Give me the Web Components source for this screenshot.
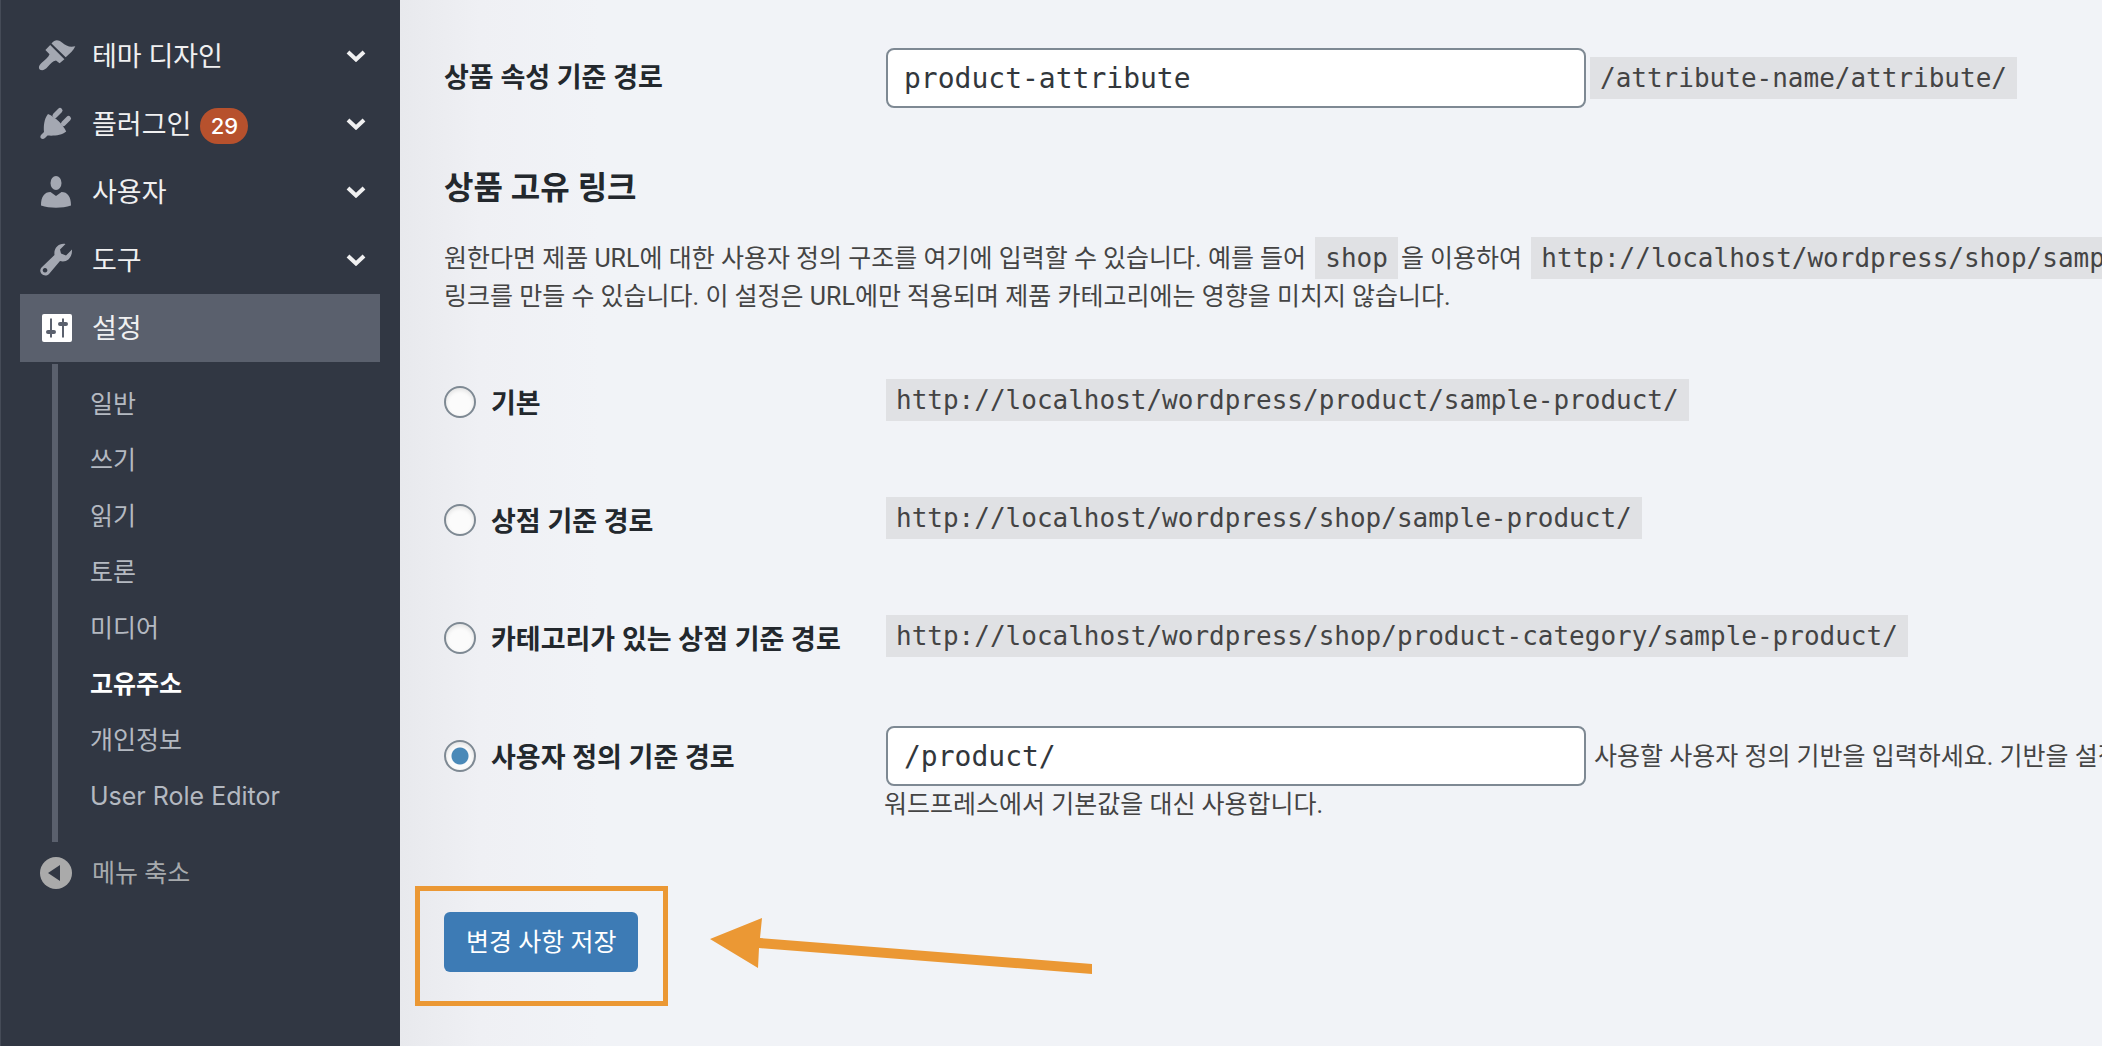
<!DOCTYPE html>
<html lang="ko">
<head>
<meta charset="utf-8">
<title>고유주소 설정</title>
<style>
html, body { margin: 0; }
body { background: #f1f3f7; font-family: Roboto, "Noto Sans CJK KR", sans-serif; color: #444; font-size: 27px; line-height: 32px; overflow: hidden; }
</style>
</head>
<body>
<wp-admin>
  <side-menu slot="menu">
    <menu-item icon="brush" arrow>테마 디자인</menu-item>
    <menu-item icon="plug" arrow count="29">플러그인</menu-item>
    <menu-item icon="user" arrow>사용자</menu-item>
    <menu-item icon="wrench" arrow>도구</menu-item>
    <menu-item icon="sliders" current>설정</menu-item>
    <sub-menu slot="sub">
      <sub-item>일반</sub-item>
      <sub-item>쓰기</sub-item>
      <sub-item>읽기</sub-item>
      <sub-item>토론</sub-item>
      <sub-item>미디어</sub-item>
      <sub-item current>고유주소</sub-item>
      <sub-item>개인정보</sub-item>
      <sub-item>User Role Editor</sub-item>
    </sub-menu>
    <collapse-button slot="foot">메뉴 축소</collapse-button>
  </side-menu>
  <permalink-form></permalink-form>
</wp-admin>
<script>
const icons = {
  brush: '<g fill="currentColor" transform="translate(0 1)"><path d="M13.500 4.500C17 .5 20 .5 24 3.500c4 3.500 8 5 13.300 3.700-1.800 4.500-5.500 7-9.600 11.100z"/><path d="M12.200 6 26.400 20.200 21.600 24.300 18 21.400C14.500 22 12.500 24.500 10 27.500c-3 3.500-5.500 4.500-8 3.300C-.2 28.500 1.200 26 4 23.500c3-2.600 6.500-5 7.500-8.200L7.400 11z"/></g>',
  plug: '<path fill="currentColor" d="M10 8c7 2.500 15.500 11 18.200 17.500C24 29.500 15 30 9.500 29.500L7 32C4 34.500.5 31.500 3.500 28.500L6 26C5.500 20 6 13 10 8z"/><path d="m17 9.500 5-5M25.500 17.500l5-5" stroke="currentColor" stroke-width="5" stroke-linecap="round"/>',
  user: '<g fill="currentColor"><ellipse cx="18" cy="9" rx="5.500" ry="7"/><path d="M12.500 18 18 22l5.500-4c6 0 9.500 4.500 9.500 13.500-9 3-21 3-30 0C3 22.500 6.500 18 12.500 18z"/></g>',
  wrench: '<path fill="currentColor" fill-rule="evenodd" d="M27.500 2C21 .8 15.500 6 16.500 13L3.500 25.500C-.5 30 6 36.500 11 32L22 19c7 2 12.500-3.500 12-11.500l-6 6-5-2-1-4zM7 26a2.300 2.300 0 1 0 .1 0z"/>',
  sliders: '<rect x="4" y="4" width="30" height="28" rx="2" fill="#fff"/><path d="M13 8.500v19M25 8.500v19" stroke="#5a606d" stroke-width="2"/><path d="M10 22h6M22 14h6" stroke="#5a606d" stroke-width="4" stroke-linecap="round"/>'
};
function define(name, html, setup) {
  const t = document.createElement('template');
  t.innerHTML = html;
  customElements.define(name, class extends HTMLElement {
    constructor() {
      super();
      this.attachShadow({ mode: 'open' }).append(t.content.cloneNode(true));
    }
    connectedCallback() { if (setup) setup(this, this.shadowRoot); }
  });
}

define('wp-admin', `
<style>
:host { display: flex; min-height: 100vh; background: linear-gradient(90deg, #e8e9ed 400px, #eff0f4 480px, #f1f3f7 600px); }
main { flex: 1; min-width: 0; overflow: hidden; }
</style>
<slot name="menu"></slot><main><slot></slot></main>`);

define('side-menu', `
<style>
:host { display: block; flex: none; box-sizing: border-box; width: 400px; padding: 22px 20px 0; background: #313743; box-shadow: inset 1px 0 #454b57; }
nav { display: flex; flex-direction: column; }
</style>
<nav aria-label="관리자 메뉴"><slot></slot><slot name="sub"></slot><slot name="foot"></slot></nav>`);

define('menu-item', `
<style>
:host { display: block; }
a { display: flex; align-items: center; height: 68px; padding: 0 14px 0 18px; color: #f0f0f1; text-decoration: none; }
:host([current]) a { background: #5a606d; }
.icon { flex: none; width: 40px; height: 36px; margin-right: 14px; color: #a4a8b2; }
.label { padding-top: 2px; }
.count { display: none; box-sizing: border-box; height: 36px; min-width: 48px; margin: 4px 0 0 9px; padding: 0 10px; border-radius: 18px; background: #b7512d; color: #fff; font: 500 22px/36px Inter, sans-serif; text-align: center; }
:host([count]) .count { display: block; }
.arrow { display: none; width: 20px; height: 12px; margin-left: auto; }
:host([arrow]) .arrow { display: block; }
</style>
<a href="#"><svg class="icon" viewBox="0 0 40 36" fill="none"></svg><span class="label"><slot></slot></span><span class="count"></span>
<svg class="arrow" viewBox="0 0 20 12" fill="none"><path d="m2 2 8 7.500L18 2" stroke="#f0f0f1" stroke-width="4"/></svg></a>`,
(el, root) => {
  root.querySelector('.icon').innerHTML = icons[el.getAttribute('icon')];
  root.querySelector('.count').textContent = el.getAttribute('count') || '';
});

define('sub-menu', `
<style>
:host { display: block; margin: 2px 0 0 32px; padding: 12px 0 18px 32px; border-left: 6px solid #5a606d; }
</style>
<slot></slot>`);

define('sub-item', `
<style>
:host { display: block; }
a { display: block; font: 25px/56px Inter, "Noto Sans CJK KR", sans-serif; color: #b4b9c1; text-decoration: none; }
:host([current]) a { color: #fff; font-weight: 600; }
</style>
<a href="#"><slot></slot></a>`);

define('collapse-button', `
<style>
:host { display: block; }
button { display: flex; align-items: center; gap: 20px; height: 62px; padding: 0 20px; border: 0; background: none; color: #a7aaad; font: inherit; font-size: 25px; }
span { padding-top: 2px; }
</style>
<button type="button"><svg width="32" height="32" viewBox="0 0 32 32"><circle cx="16" cy="16" r="16" fill="#aaa"/><path d="M8 16 20 8v16z" fill="#313743"/></svg><span><slot></slot></span></button>`);

define('code-chip', `
<style>
:host { display: inline; line-height: 30px; }
code { padding: 6px 10px; background: #e0e1e4; color: #444; font: 26px/30px "DejaVu Sans Mono", monospace; white-space: nowrap; }
</style>
<code><slot></slot></code>`);

define('save-button', `
<style>
:host { display: block; position: relative; width: max-content; }
button { height: 60px; padding: 2px 22px 0; border: 0; border-radius: 6px; background: #3d7bb5; color: #fff; font: inherit; font-size: 25px; }
.frame { position: absolute; inset: -26px -30px -34px -29px; border: 5px solid #eb9834; pointer-events: none; }
.arrow { position: absolute; left: 266px; top: 5px; width: 382px; height: 60px; }
</style>
<button type="submit"><slot></slot></button>
<div class="frame"></div>
<svg class="arrow" viewBox="0 0 382 60" fill="#eb9834"><path d="M0 22 52 1 50 21 382 47V57L49 31 48 51z"/></svg>`);

define('permalink-form', `
<style>
:host { display: block; padding: 48px 0 74px 44px; }
form { display: flex; flex-direction: column; }
.row { display: grid; grid-template-columns: 442px 1fr; align-items: center; min-height: 60px; }
.field { display: flex; align-items: center; gap: 4px; white-space: nowrap; min-width: 0; }
label { display: flex; align-items: center; font-weight: 600; color: #23282d; }
label span { margin-top: 4px; }
h2 { margin: 56px 0 0; font-size: 32px; line-height: 48px; font-weight: 600; color: #23282d; }
p { margin: 28px 0 0; font-size: 25px; line-height: 38px; white-space: nowrap; }
p code-chip { margin: 0 3px; }
input[type=text] { box-sizing: border-box; width: 700px; height: 60px; flex: none; padding: 0 16px; border: 2px solid #7e8993; border-radius: 8px; background: #fff; color: #32373c; font: 28px "DejaVu Sans Mono", monospace; }
input[type=radio] { appearance: none; box-sizing: border-box; flex: none; width: 32px; height: 32px; margin: 0 15px 0 0; border: 2px solid #7e8993; border-radius: 50%; background: #fbfbfb; box-shadow: inset 0 2px 4px rgba(0,0,0,.1); }
input[type=radio]:checked { background: radial-gradient(circle, #4a89b8 8px, #fbfbfb 9px); }
.options { display: flex; flex-direction: column; gap: 58px; margin-top: 56px; }
.options code-chip { margin-bottom: 4px; }
.note { padding: 2px 0 0 4px; font-size: 25px; }
.more { margin: 0 0 0 440px; }
save-button { margin-top: 88px; }
</style>
<form>
  <div class="row"><label for="attr">상품 속성 기준 경로</label>
    <div class="field"><input id="attr" type="text" value="product-attribute"><code-chip>/attribute-name/attribute/</code-chip></div></div>
  <h2>상품 고유 링크</h2>
  <p>원한다면 제품 URL에 대한 사용자 정의 구조를 여기에 입력할 수 있습니다. 예를 들어 <code-chip>shop</code-chip>을 이용하여 <code-chip>http://localhost/wordpress/shop/sample-product/</code-chip><br>링크를 만들 수 있습니다. 이 설정은 URL에만 적용되며 제품 카테고리에는 영향을 미치지 않습니다.</p>
  <div class="options">
    <div class="row"><label><input type="radio" name="base"><span>기본</span></label><div class="field"><code-chip>http://localhost/wordpress/product/sample-product/</code-chip></div></div>
    <div class="row"><label><input type="radio" name="base"><span>상점 기준 경로</span></label><div class="field"><code-chip>http://localhost/wordpress/shop/sample-product/</code-chip></div></div>
    <div class="row"><label><input type="radio" name="base"><span>카테고리가 있는 상점 기준 경로</span></label><div class="field"><code-chip>http://localhost/wordpress/shop/product-category/sample-product/</code-chip></div></div>
    <div class="row"><label><input type="radio" name="base" checked><span>사용자 정의 기준 경로</span></label><div class="field"><input type="text" aria-label="사용자 정의 기준 경로" value="/product/"><span class="note">사용할 사용자 정의 기반을 입력하세요. 기반을 설정</span></div></div>
  </div>
  <p class="more">워드프레스에서 기본값을 대신 사용합니다.</p>
  <save-button>변경 사항 저장</save-button>
</form>`);
</script>
</body>
</html>
